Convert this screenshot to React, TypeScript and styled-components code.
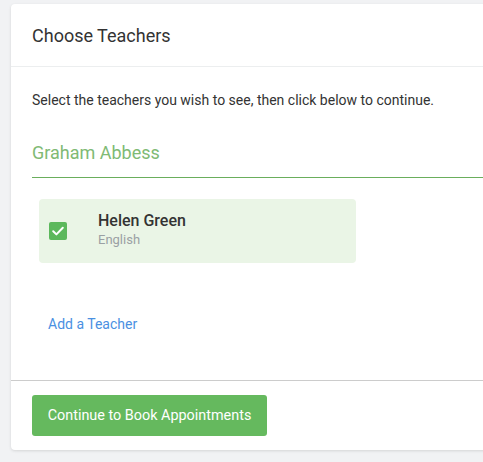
import React from "react";
import styled, { createGlobalStyle } from "styled-components";

const GlobalStyle = createGlobalStyle`
    html, body {
        margin: 0;
        padding: 0;
        background: #f1f2f4;
        overflow: hidden;
        font-family: Roboto, "Liberation Sans", sans-serif;
    }
`;

const Page = styled.div`
    box-sizing: border-box;
    width: 483px;
    height: 462px;
    padding: 4px 0 0 11px;
    overflow: hidden;
`;

const Card = styled.div`
    box-sizing: border-box;
    width: 540px;
    height: 446px;
    background: #fff;
    border-radius: 4px;
    box-shadow: 0 1px 3px rgba(0, 0, 0, 0.12);
    display: flex;
    flex-direction: column;
`;

const Header = styled.div`
    box-sizing: border-box;
    height: 63px;
    padding: 0 21px;
    display: flex;
    align-items: center;
    border-bottom: 1px solid #eceeef;
    font-size: 18px;
    color: #333;
`;

const Body = styled.div`
    flex: 1;
    padding: 24px 0 0 21px;
    display: flex;
    flex-direction: column;
`;

const Intro = styled.p`
    margin: 0;
    font-size: 14px;
    line-height: 18px;
    color: #333;
`;

const GroupTitle = styled.div`
    margin-top: 34px;
    padding-bottom: 14px;
    font-size: 18px;
    line-height: 20px;
    color: #80ba74;
    border-bottom: 1px solid #6aae5c;
`;

const TeacherList = styled.div`
    padding: 21px 0 0 7px;
`;

const TeacherCard = styled.label`
    box-sizing: border-box;
    width: 317px;
    height: 64px;
    background: #eaf5e6;
    border-radius: 4px;
    display: flex;
    align-items: center;
    padding-left: 10px;
`;

const Check = styled.span<{ $checked: boolean }>`
    width: 18px;
    height: 18px;
    border-radius: 2px;
    background: ${(p) => (p.$checked ? "#5cb85c" : "#fff")};
    display: flex;
    align-items: center;
    justify-content: center;
    margin-right: 31px;
`;

const TeacherInfo = styled.div`
    display: flex;
    flex-direction: column;
    margin-top: -3px;
    .name {
        font-size: 16px;
        font-weight: 500;
        color: #333;
        line-height: 20px;
    }
    .subject {
        font-size: 13px;
        color: #9aa0a4;
        line-height: 17px;
    }
`;

const AddLink = styled.a`
    margin: 53px 0 0 16px;
    font-size: 14px;
    color: #4a90e2;
    text-decoration: none;
    cursor: pointer;
`;

const Footer = styled.div`
    box-sizing: border-box;
    height: 70px;
    border-top: 1px solid #cccccc;
    padding: 14px 21px 0;
`;

const Button = styled.button`
    box-sizing: border-box;
    width: 235px;
    height: 41px;
    border: none;
    border-radius: 3px;
    background: #65b95e;
    color: #fff;
    font-family: Roboto, "Liberation Sans", sans-serif;
    font-size: 14.4px;
    font-weight: 400;
    cursor: pointer;
`;

const teachers = [{ name: "Helen Green", subject: "English", checked: true }];

export default function App() {
    return (
        <>
            <GlobalStyle />
            <Page>
                <Card>
                    <Header>Choose Teachers</Header>
                    <Body>
                        <Intro>Select the teachers you wish to see, then click below to continue.</Intro>
                        <GroupTitle>Graham Abbess</GroupTitle>
                        <TeacherList>
                            {teachers.map((t) => (
                                <TeacherCard key={t.name}>
                                    <Check $checked={t.checked}>
                                        <svg width="14" height="14" viewBox="0 0 14 14">
                                            <path d="M2.2 7.3 L5.4 10.4 L11.8 3.8" fill="none" stroke="#fff" strokeWidth="2" strokeLinecap="round" strokeLinejoin="round" />
                                        </svg>
                                    </Check>
                                    <TeacherInfo>
                                        <span className="name">{t.name}</span>
                                        <span className="subject">{t.subject}</span>
                                    </TeacherInfo>
                                </TeacherCard>
                            ))}
                        </TeacherList>
                        <AddLink>Add a Teacher</AddLink>
                    </Body>
                    <Footer>
                        <Button>Continue to Book Appointments</Button>
                    </Footer>
                </Card>
            </Page>
        </>
    );
}
